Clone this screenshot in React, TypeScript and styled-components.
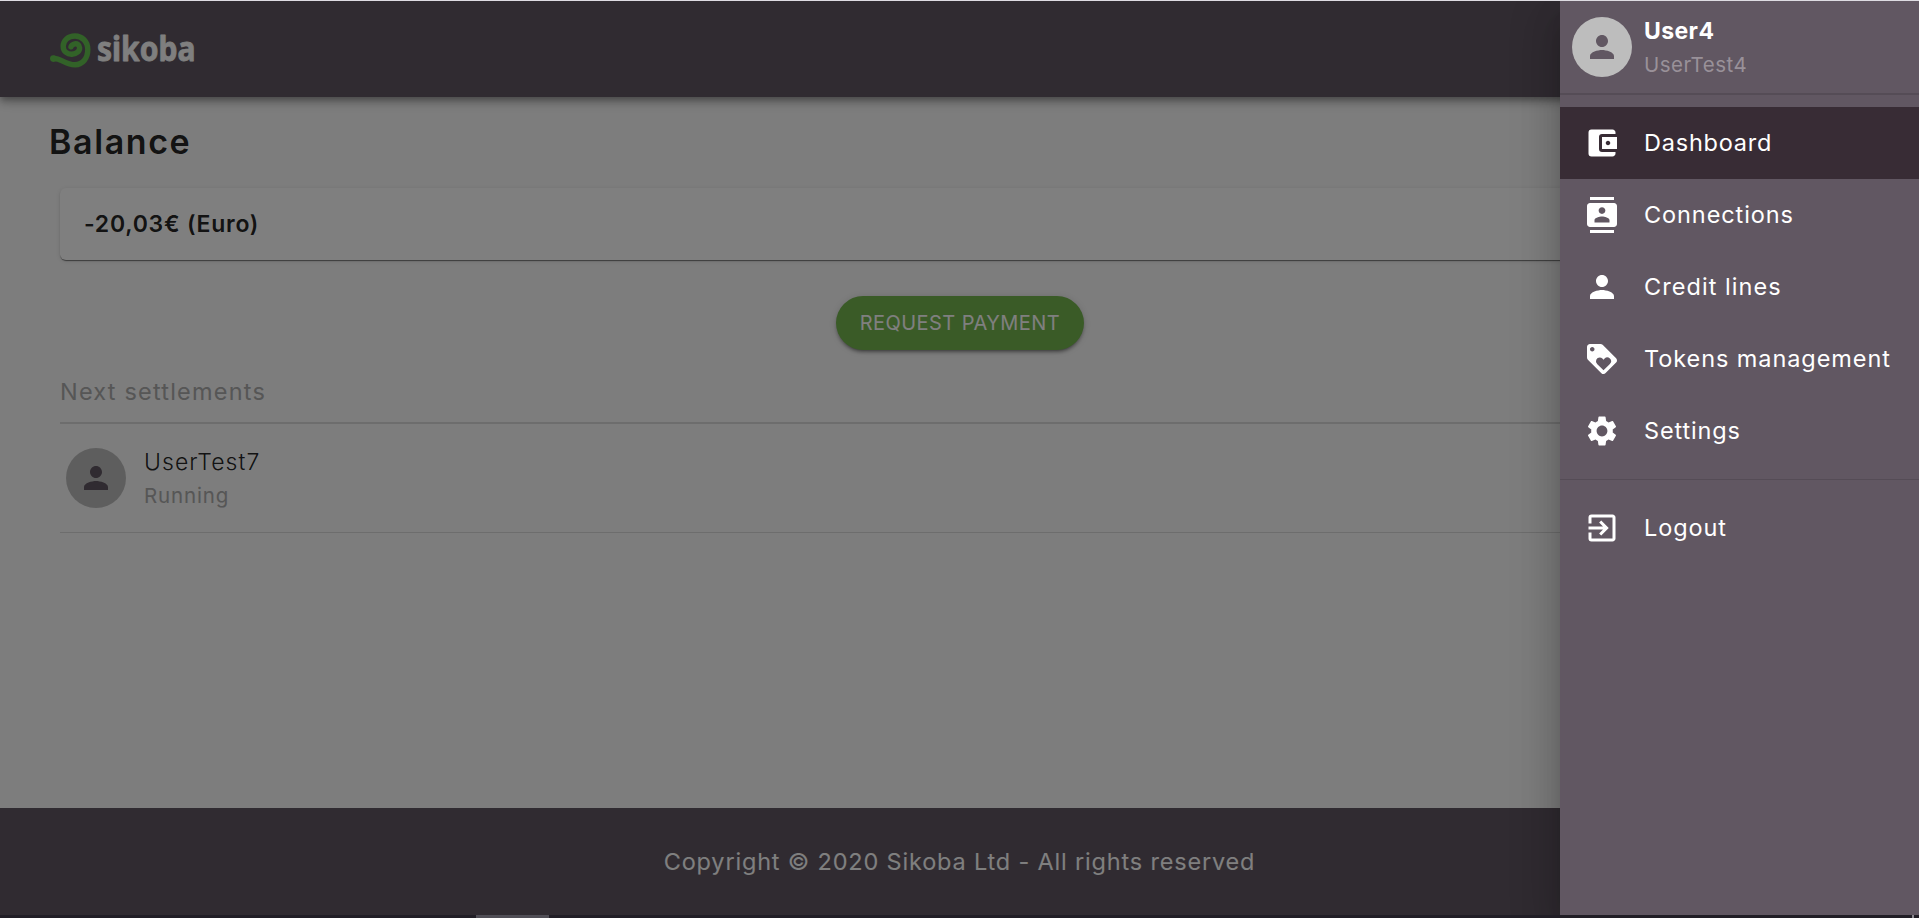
import React from 'react';
import styled, { createGlobalStyle } from 'styled-components';
import type { IconType } from 'react-icons';
import {
  MdAccountBalanceWallet,
  MdContacts,
  MdExitToApp,
  MdLoyalty,
  MdPerson,
  MdSettings,
} from 'react-icons/md';

const GlobalStyle = createGlobalStyle`
  *, *::before, *::after { box-sizing: border-box; }
  body {
    margin: 0;
    overflow: hidden;
    font-family: Inter, "Liberation Sans", sans-serif;
    font-size: 23.5px;
    color: rgba(0, 0, 0, 0.87);
  }
`;

const Frame = styled.div`
  display: flex;
  flex-direction: column;
  height: 100vh;
`;

const TopEdge = styled.div`
  flex: none;
  height: 1px;
  background: #dedce2;
`;

const BottomEdge = styled.div`
  flex: none;
  display: flex;
  justify-content: space-between;
  height: 3px;
  padding: 0 5px 0 476px;
  background: #211e26;
`;

const EdgeThumb = styled.div<{ $width: number; $color: string }>`
  width: ${(p) => p.$width}px;
  height: 3px;
  background: ${(p) => p.$color};
`;

const Screen = styled.div`
  position: relative;
  flex: 1;
  display: flex;
  flex-direction: column;
  min-height: 0;
  overflow: hidden;
  background: #fafafa;
`;

const Header = styled.header`
  flex: none;
  display: flex;
  align-items: center;
  height: 96px;
  padding: 0 48px;
  background: #615762;
  box-shadow: 0 3px 6px -1px rgba(0, 0, 0, 0.25), 0 6px 8px rgba(0, 0, 0, 0.16),
    0 2px 14px rgba(0, 0, 0, 0.14);
`;

const Logo = styled.svg`
  display: block;
  width: 160px;
  height: 64px;
`;

const LogoText = styled.text`
  font-family: "Noto Sans", sans-serif;
  font-size: 34px;
  font-weight: 700;
  fill: #fff;
  stroke: #fff;
  stroke-width: 0.8;
  stroke-linejoin: round;
`;

const Main = styled.main`
  flex: 1;
  padding: 22px 48px 0;
`;

const Title = styled.h1`
  margin: 0;
  padding-left: 1px;
  font-size: 34px;
  line-height: 45px;
  font-weight: 600;
  letter-spacing: 1.6px;
`;

const Content = styled.div`
  display: flex;
  flex-direction: column;
  padding: 24px 12px 0;
`;

const BalanceCard = styled.section`
  display: flex;
  align-items: center;
  height: 72px;
  padding: 0 24px;
  border-radius: 6px;
  background: #fff;
  font-size: 23px;
  font-weight: 600;
  letter-spacing: 0.75px;
  box-shadow: 0 2px 1px -1px rgba(0, 0, 0, 0.35), 0 1px 1px rgba(0, 0, 0, 0.2),
    0 1px 4px rgba(0, 0, 0, 0.12);
`;

const RequestButton = styled.button`
  align-self: center;
  width: 248px;
  height: 54px;
  margin-top: 36px;
  padding: 0 0 0 1px;
  border: 0;
  border-radius: 27px;
  background: #74b64e;
  color: #fff;
  font: inherit;
  font-size: 20px;
  letter-spacing: 0.45px;
  text-transform: uppercase;
  box-shadow: 0 4px 2px -3px rgba(0, 0, 0, 0.25), 0 3px 3px rgba(0, 0, 0, 0.2),
    0 1px 7px rgba(0, 0, 0, 0.15);
`;

const SectionHeading = styled.h2`
  margin: 24px 0 0;
  padding-bottom: 12px;
  border-bottom: 2px solid #dadada;
  font-size: 23.5px;
  line-height: 36px;
  font-weight: 400;
  letter-spacing: 1.2px;
  color: #acacac;
`;

const Settlement = styled.div`
  display: flex;
  align-items: center;
  gap: 18px;
  height: 109px;
  padding-left: 6px;
  border-bottom: 1px solid #dadada;
`;

const Avatar = styled.span`
  flex: none;
  display: flex;
  align-items: center;
  justify-content: center;
  width: 60px;
  height: 60px;
  border-radius: 50%;
  background: #bdbdbd;
  color: #615762;
  font-size: 36px;
`;

const Person = styled.div`
  padding-top: 2px;
`;

const PersonName = styled.div<{ $weight: number; $spacing: number }>`
  font-size: 23px;
  line-height: 34px;
  font-weight: ${(p) => p.$weight};
  letter-spacing: ${(p) => p.$spacing}px;
`;

const PersonNote = styled.div<{ $color: string; $spacing: number }>`
  font-size: 20.5px;
  line-height: 34px;
  font-weight: 400;
  letter-spacing: ${(p) => p.$spacing}px;
  color: ${(p) => p.$color};
`;

const Footer = styled.footer`
  flex: none;
  display: flex;
  align-items: center;
  justify-content: center;
  height: 107px;
  background: #615762;
  color: #fff;
  letter-spacing: 0.82px;
`;

const Backdrop = styled.div`
  position: absolute;
  inset: 0;
  background: rgba(0, 0, 0, 0.5);
`;

const Drawer = styled.aside`
  position: absolute;
  top: 0;
  right: 0;
  bottom: 0;
  display: flex;
  flex-direction: column;
  width: 359px;
  background: #615762;
  color: #fff;
  box-shadow: 0 12px 15px -8px rgba(0, 0, 0, 0.2), 0 24px 36px 3px rgba(0, 0, 0, 0.14),
    0 9px 45px 8px rgba(0, 0, 0, 0.12);
`;

const Account = styled.div`
  display: flex;
  align-items: center;
  gap: 12px;
  height: 94px;
  padding: 0 12px;
  border-bottom: 2px solid #554c56;
`;

const Menu = styled.nav`
  padding: 12px 0;
`;

const LowerMenu = styled(Menu)`
  border-top: 1px solid #554c56;
`;

const MenuItem = styled.a<{ $active?: boolean; $spacing: number }>`
  display: flex;
  align-items: center;
  gap: 24px;
  height: 72px;
  padding: 0 24px;
  background: ${(p) => (p.$active ? '#382c35' : 'transparent')};
  letter-spacing: ${(p) => p.$spacing}px;
  white-space: nowrap;

  svg {
    flex: none;
    font-size: 36px;
  }
`;

const MenuLabel = styled.span`
  padding-bottom: 2px;
`;

interface Entry {
  label: string;
  icon: IconType;
  spacing: number;
  active?: boolean;
}

const entries: Entry[] = [
  { label: 'Dashboard', icon: MdAccountBalanceWallet, spacing: 0.78, active: true },
  { label: 'Connections', icon: MdContacts, spacing: 0.9 },
  { label: 'Credit lines', icon: MdPerson, spacing: 1.05 },
  { label: 'Tokens management', icon: MdLoyalty, spacing: 0.92 },
  { label: 'Settings', icon: MdSettings, spacing: 0.85 },
];

const BrandLogo = () => (
  <Logo viewBox="48 17 160 64" role="img" aria-label="sikoba">
    <circle cx="53.4" cy="58.6" r="3.3" fill="#64c450" />
    <path
      d="M53.2 58.6 C60 57.6 65 64.6 75 64.8 C83 64.6 87.8 58 87.8 49.5 C87.8 41.5 82 36 75 36 C68 36 63.2 40.5 63.2 46.2 C63.2 51.5 67.3 54.4 72 54.2 C77 54 79.8 51 79.6 47.6 C79.4 44.6 77 43.4 74.8 43.8 C72.8 44.2 71.4 45.4 71 46.8"
      fill="none"
      stroke="#64c450"
      strokeWidth="5.4"
      strokeLinecap="round"
      strokeLinejoin="round"
    />
    <LogoText x="97" y="60.5" textLength="98.5" lengthAdjust="spacingAndGlyphs">
      sikoba
    </LogoText>
  </Logo>
);

export default function App() {
  return (
    <Frame>
      <GlobalStyle />
      <TopEdge />
      <Screen>
        <Header>
          <BrandLogo />
        </Header>
        <Main>
          <Title>Balance</Title>
          <Content>
            <BalanceCard>-20,03€ (Euro)</BalanceCard>
            <RequestButton>Request payment</RequestButton>
            <SectionHeading>Next settlements</SectionHeading>
            <Settlement>
              <Avatar>
                <MdPerson />
              </Avatar>
              <Person>
                <PersonName $weight={300} $spacing={1.05}>
                  UserTest7
                </PersonName>
                <PersonNote $color="#acacac" $spacing={0.85}>
                  Running
                </PersonNote>
              </Person>
            </Settlement>
          </Content>
        </Main>
        <Footer>Copyright © 2020 Sikoba Ltd - All rights reserved</Footer>
        <Backdrop />
        <Drawer>
          <Account>
            <Avatar>
              <MdPerson />
            </Avatar>
            <Person>
              <PersonName $weight={700} $spacing={0.4}>
                User4
              </PersonName>
              <PersonNote $color="#999199" $spacing={0.5}>
                UserTest4
              </PersonNote>
            </Person>
          </Account>
          <Menu>
            {entries.map(({ label, icon: Icon, spacing, active }) => (
              <MenuItem key={label} $active={active} $spacing={spacing}>
                <Icon />
                <MenuLabel>{label}</MenuLabel>
              </MenuItem>
            ))}
          </Menu>
          <LowerMenu>
            <MenuItem $spacing={0.9}>
              <MdExitToApp />
              <MenuLabel>Logout</MenuLabel>
            </MenuItem>
          </LowerMenu>
        </Drawer>
      </Screen>
      <BottomEdge>
        <EdgeThumb $width={73} $color="#504e56" />
        <EdgeThumb $width={2} $color="#8b888f" />
      </BottomEdge>
    </Frame>
  );
}
